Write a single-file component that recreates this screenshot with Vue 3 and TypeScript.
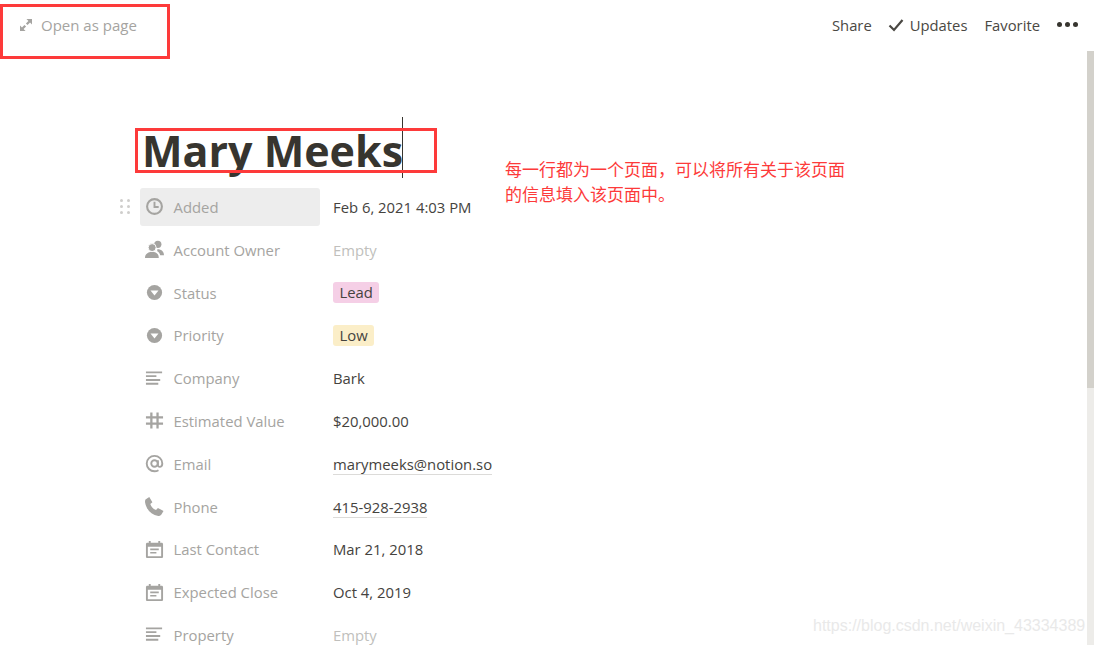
<script setup lang="ts">
type Icon = 'clock' | 'person' | 'select' | 'text' | 'number' | 'at' | 'phone' | 'date'

interface Prop {
  icon: Icon
  label: string
  value: string
  kind?: 'empty' | 'link' | 'pink' | 'yellow'
}

const props: Prop[] = [
  { icon: 'clock', label: 'Added', value: 'Feb 6, 2021 4:03 PM' },
  { icon: 'person', label: 'Account Owner', value: 'Empty', kind: 'empty' },
  { icon: 'select', label: 'Status', value: 'Lead', kind: 'pink' },
  { icon: 'select', label: 'Priority', value: 'Low', kind: 'yellow' },
  { icon: 'text', label: 'Company', value: 'Bark' },
  { icon: 'number', label: 'Estimated Value', value: '$20,000.00' },
  { icon: 'at', label: 'Email', value: 'marymeeks@notion.so', kind: 'link' },
  { icon: 'phone', label: 'Phone', value: '415-928-2938', kind: 'link' },
  { icon: 'date', label: 'Last Contact', value: 'Mar 21, 2018' },
  { icon: 'date', label: 'Expected Close', value: 'Oct 4, 2019' },
  { icon: 'text', label: 'Property', value: 'Empty', kind: 'empty' },
]
</script>

<template>
  <div class="page">
    <header class="topbar">
      <div class="open">
        <svg class="open-icon" viewBox="0 0 14 14">
          <path d="M7.500 0H14v6.500l-2.300-2.300-2.900 2.900-1.900-1.900 2.900-2.900zM6.500 14H0V7.500l2.300 2.300 2.900-2.900 1.900 1.900-2.900 2.900z" />
        </svg>
        <span>Open as page</span>
      </div>
      <nav class="actions">
        <span>Share</span>
        <span class="updates">
          <svg class="check" viewBox="0 0 16 14"><path d="M1.500 7.500l4.500 4.500 8.500-10" /></svg>
          Updates
        </span>
        <span>Favorite</span>
        <span class="dots"><i></i><i></i><i></i></span>
      </nav>
    </header>

    <div class="body">
      <main class="content">
        <h1 class="title">Mary Meeks<span class="caret"></span></h1>
        <div class="rows">
          <div v-for="(p, i) in props" :key="p.label" class="row">
            <div class="name" :class="{ active: i === 0 }">
              <span v-if="i === 0" class="grip"><i v-for="n in 6" :key="n"></i></span>
              <svg class="icon" viewBox="0 0 20 20">
                <template v-if="p.icon === 'clock'">
                  <circle cx="10" cy="10" r="7.800" fill="none" stroke="#a5a4a1" stroke-width="2.200" />
                  <path d="M10 5v5.600h4.400" fill="none" stroke="#a5a4a1" stroke-width="2" />
                </template>
                <template v-else-if="p.icon === 'person'">
                  <circle cx="13.500" cy="4.500" r="3.800" />
                  <circle cx="7.500" cy="8" r="4.200" stroke="#fff" stroke-width="1" />
                  <path d="M0 19c0-3.800 2.200-5.800 5.500-6.500h4c3.300.7 5 2.700 5 6.500zM13 9.500c3.500.5 7 1.800 7 6.500h-4c-.4-2-1.600-3.600-3.400-4.500.5-.6.600-1.300.4-2z" />
                </template>
                <template v-else-if="p.icon === 'select'">
                  <circle cx="10" cy="10" r="8" />
                  <path d="M5.800 8h8.400L10 13.200z" fill="#fff" />
                </template>
                <template v-else-if="p.icon === 'text'">
                  <path d="M1 2.500h17v2H1zM1 6.500h11v2H1zM1 10.500h15v2H1zM1 14.500h13v2H1z" />
                </template>
                <template v-else-if="p.icon === 'number'">
                  <path d="M5.500 1.500h2.400v17H5.500zM12 1.500h2.400v17H12zM1 5.500h18v2.400H1zM1 12h18v2.400H1z" />
                </template>
                <template v-else-if="p.icon === 'at'">
                  <circle cx="10" cy="10" r="3.400" fill="none" stroke="#a5a4a1" stroke-width="2" />
                  <path d="M13.600 6.500v5.300c0 2.600 4.600 2.600 4.600-1.800 0-4.600-3.600-8-8.200-8S1.800 5.500 1.800 10s3.600 8.200 8.200 8.200c1.700 0 3-.4 4.200-1.100" fill="none" stroke="#a5a4a1" stroke-width="2" />
                </template>
                <template v-else-if="p.icon === 'phone'">
                  <path d="M.5 2.500L4.500 0l3.300 5.500-2.200 1.800c.8 2.800 3.400 5.600 6 6.400l2-2.200 5.900 3.300-2.400 4c-.7 1-1.800 1.400-3.100 1.100C6.400 18.600 1.600 13.500.1 5.700c-.2-1.200 0-2.400.4-3.200z" />
                </template>
                <template v-else>
                  <path fill-rule="evenodd" d="M4 1h2v2h8V1h2v2h1.500C18.400 3 19 3.600 19 4.500v13c0 .9-.6 1.500-1.500 1.500h-15C1.600 19 1 18.400 1 17.500v-13C1 3.600 1.600 3 2.500 3H4zM3 7v10h14V7z" />
                  <path d="M5.500 9h9v1.700h-9zM5.500 12.600h6.500v1.700H5.500z" />
                </template>
              </svg>
              <span class="label">{{ p.label }}</span>
            </div>
            <div class="value">
              <span :class="p.kind">{{ p.value }}</span>
            </div>
          </div>
        </div>
      </main>
      <aside class="scrollbar"><div class="thumb"></div></aside>
    </div>

    <div class="mark mark-open"></div>
    <div class="mark mark-title"></div>
    <p class="note">每一行都为一个页面，可以将所有关于该页面<br />的信息填入该页面中。</p>
    <div class="watermark">https://blog.csdn.net/weixin_43334389</div>
  </div>
</template>

<style scoped>
.page {
  position: relative;
  width: 1094px;
  height: 645px;
  overflow: hidden;
  display: flex;
  flex-direction: column;
  background: #fff;
  color: #45433e;
  font-family: "Open Sans", "Noto Sans CJK SC", sans-serif;
  font-size: 14.85px;
}

.topbar {
  height: 51px;
  flex: none;
  display: flex;
  justify-content: space-between;
  padding: 0 16px 0 20px;
  box-sizing: border-box;
}
.open {
  display: flex;
  align-items: center;
  gap: 9px;
  height: 49px;
  font-size: 15px;
  color: #a5a4a1;
}
.open-icon {
  width: 12px;
  height: 12px;
  fill: #a5a4a1;
}
.actions {
  display: flex;
  align-items: center;
  gap: 17px;
  height: 49px;
  font-size: 14.8px;
  color: #4a4843;
}
.updates {
  display: flex;
  align-items: center;
  gap: 6px;
}
.check {
  width: 16px;
  height: 14px;
  margin-left: -1px;
  fill: none;
  stroke: #4a4843;
  stroke-width: 2.200;
}
.dots {
  display: flex;
  gap: 3px;
}
.dots i {
  width: 5px;
  height: 5px;
  border-radius: 50%;
  background: #37352f;
}

.body {
  flex: 1;
  display: flex;
  min-height: 0;
}
.content {
  flex: 1;
  padding: 70px 0 0 140px;
  min-width: 0;
}
.title {
  position: relative;
  margin: 0 0 0 2px;
  width: fit-content;
  font-size: 43px;
  line-height: 60px;
  font-weight: 700;
  color: #37352f;
}
.caret {
  position: absolute;
  right: 0;
  top: -4px;
  height: 61px;
  width: 1px;
  background: #37352f;
}

.rows {
  margin-top: 4.6px;
}
.row {
  display: flex;
  align-items: center;
  height: 42.8px;
}
.name {
  position: relative;
  width: 180px;
  height: 38px;
  display: flex;
  align-items: center;
  gap: 9.500px;
  padding-left: 5px;
  box-sizing: border-box;
  border-radius: 3px;
  color: #a5a4a1;
}
.name.active {
  background: #ededed;
}
.grip {
  position: absolute;
  left: -20px;
  top: 11px;
  display: grid;
  grid-template-columns: 3px 3px;
  gap: 3px 4px;
}
.grip i {
  width: 3px;
  height: 3px;
  border-radius: 50%;
  background: #cfcecc;
}
.icon {
  width: 19px;
  height: 19px;
  fill: #a5a4a1;
  flex: none;
}
.value {
  padding-left: 13px;
}
.empty {
  color: #c0bfbc;
}
.link {
  border-bottom: 1px solid #dcdbd9;
}
.pink,
.yellow {
  display: inline-block;
  padding: 0 6.500px;
  line-height: 21px;
  border-radius: 3px;
}
.pink {
  background: #f5cfe6;
}
.yellow {
  background: #fbeec8;
}

.scrollbar {
  width: 7px;
  flex: none;
  background: #edece9;
}
.thumb {
  height: 337px;
  background: #d3d1cb;
}

.mark {
  position: absolute;
  border: 3px solid #fd3a3a;
  box-sizing: border-box;
}
.mark-open {
  left: 0;
  top: 4px;
  width: 170px;
  height: 55px;
}
.mark-title {
  left: 135px;
  top: 128px;
  width: 302px;
  height: 45px;
}
.note {
  position: absolute;
  left: 505px;
  top: 156px;
  margin: 0;
  font-size: 17px;
  line-height: 25px;
  color: #fd3a3a;
  font-family: "Noto Sans CJK SC", sans-serif;
}
.watermark {
  position: absolute;
  left: 813px;
  top: 617px;
  font-family: "Liberation Sans", sans-serif;
  font-size: 16px;
  color: #e9e9e9;
  white-space: nowrap;
}
</style>
